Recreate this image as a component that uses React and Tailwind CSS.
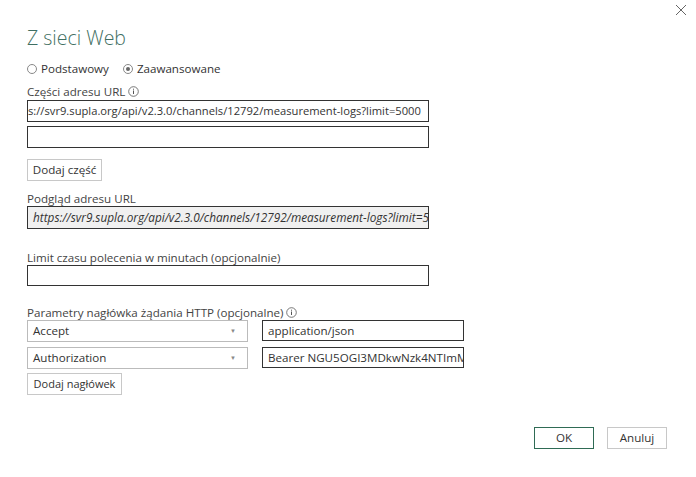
import React from "react";

const Info = () => (
  <svg width="11" height="11" viewBox="0 0 11 11" className="inline-block ml-[3px] align-[-1px]">
    <circle cx="5.5" cy="5.5" r="4.8" fill="none" stroke="#555" strokeWidth="0.8" />
    <rect x="5" y="4.5" width="1" height="3.5" fill="#555" />
    <rect x="5" y="2.7" width="1" height="1" fill="#555" />
  </svg>
);

const Radio = ({ checked }) => (
  <span className="inline-flex w-[10px] h-[10px] rounded-full border border-[#888] items-center justify-center mr-[4px]">
    {checked && <span className="w-[4px] h-[4px] rounded-full bg-[#666]" />}
  </span>
);

const Select = ({ value }) => (
  <div className="w-[221px] h-[22px] border border-[#bbb] flex items-center justify-between px-[5px]">
    <span>{value}</span>
    <span className="text-[6px] text-[#888] mr-[6px]">▼</span>
  </div>
);

const App = () => {
  return (
    <div
      className="w-[696px] h-[477px] bg-white relative text-[11.6px] text-[#333] overflow-hidden"
      style={{ fontFamily: '"Open Sans", "Noto Sans", sans-serif' }}
    >
      <svg width="12" height="12" viewBox="0 0 12 12" className="absolute top-[4px] right-[9px]">
        <path d="M1 1 L11 11 M11 1 L1 11" stroke="#666" strokeWidth="1" />
      </svg>

      <div className="pl-[27px] pt-[26px] flex flex-col">
        <h1 className="text-[19.5px] leading-[24px] font-light text-[#3f6f62]">Z sieci Web</h1>

        <div className="flex items-center gap-[14px] mt-[11px] h-[16px]">
          <label className="flex items-center"><Radio />Podstawowy</label>
          <label className="flex items-center"><Radio checked />Zaawansowane</label>
        </div>

        <div className="mt-[6px] h-[16px] text-[#444]">Części adresu URL<Info /></div>
        <div className="mt-[1px] w-[402px] h-[22px] border border-[#333] flex items-center overflow-hidden whitespace-nowrap text-[11.2px]">
          s://svr9.supla.org/api/v2.3.0/channels/12792/measurement-logs?limit=5000
        </div>
        <div className="mt-[4px] w-[402px] h-[22px] border border-[#333]" />

        <button className="mt-[11px] w-[75px] h-[22px] border border-[#c8c8c8] bg-white">Dodaj część</button>

        <div className="mt-[9px] h-[16px] text-[#444]">Podgląd adresu URL</div>
        <div className="w-[402px] h-[23px] border border-[#333] bg-[#f0f0f0] flex items-center px-[5px] italic overflow-hidden whitespace-nowrap text-[11.8px]">
          https://svr9.supla.org/api/v2.3.0/channels/12792/measurement-logs?limit=5000
        </div>

        <div className="mt-[20px] h-[16px] text-[#444]">Limit czasu polecenia w minutach (opcjonalnie)</div>
        <div className="w-[402px] h-[21px] border border-[#333]" />

        <div className="mt-[18px] h-[16px] text-[#444]">Parametry nagłówka żądania HTTP (opcjonalne)<Info /></div>
        <div className="flex gap-[14px]">
          <Select value="Accept" />
          <div className="w-[202px] h-[21px] border border-[#333] flex items-center px-[5px]">application/json</div>
        </div>
        <div className="mt-[5px] flex gap-[14px]">
          <Select value="Authorization" />
          <div className="w-[202px] h-[21px] border border-[#333] flex items-center px-[5px] overflow-hidden whitespace-nowrap">Bearer NGU5OGI3MDkwNzk4NTImMzk1</div>
        </div>
        <button className="mt-[4px] w-[95px] h-[22px] border border-[#c8c8c8] bg-white text-[11px]">Dodaj nagłówek</button>
      </div>

      <div className="absolute left-[534px] top-[427px] flex gap-[13px]">
        <button className="w-[60px] h-[22px] border border-[#2f6b55] bg-white">OK</button>
        <button className="w-[60px] h-[22px] border border-[#c8c8c8] bg-white">Anuluj</button>
      </div>
    </div>
  );
};

export default App;
